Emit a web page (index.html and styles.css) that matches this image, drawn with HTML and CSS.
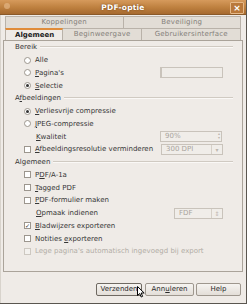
FILE: index.html
```html
<!DOCTYPE html>
<html><head>
<title>PDF-optie</title>
<link rel="stylesheet" href="styles.css">
</head>
<body>
<div class="window">
  <div class="titlebar">
    <span class="menu-dot"></span>
    <span class="title">PDF-optie</span>
    <span class="close">&#215;</span>
  </div>
  <div class="client">
    <div class="tabs">
      <div class="tabrow back">
        <div class="tab w119">Koppelingen</div>
        <div class="tab w118">Beveiliging</div>
      </div>
      <div class="tabrow front">
        <div class="tab active w58">Algemeen</div>
        <div class="tab w80">Beginweergave</div>
        <div class="tab w99">Gebruikersinterface</div>
      </div>
    </div>
    <div class="panel">
      <div class="row section"><span>Bereik</span><i class="rule"></i></div>
      <div class="row opt"><b class="radio"></b><span>Alle</span></div>
      <div class="row opt"><b class="radio"></b><span><u>P</u>agina's</span><span class="field pages"></span></div>
      <div class="row opt"><b class="radio on"></b><span><u>S</u>electie</span></div>
      <div class="row section"><span>A<u>f</u>beeldingen</span><i class="rule"></i></div>
      <div class="row opt"><b class="radio on"></b><span><u>V</u>erliesvrije compressie</span></div>
      <div class="row opt"><b class="radio"></b><span><u>J</u>PEG-compressie</span></div>
      <div class="row sub"><span><u>K</u>waliteit</span><span class="field spin">90%<em class="arrows">&#9652;<br>&#9662;</em></span></div>
      <div class="row opt"><b class="check"></b><span><u>A</u>fbeeldingsresolutie verminderen</span><span class="field combo dpi">300 DPI<em class="drop">&#9662;</em></span></div>
      <div class="row section"><span>Algemeen</span><i class="rule"></i></div>
      <div class="row opt"><b class="check"></b><span>P<u>D</u>F/A-1a</span></div>
      <div class="row opt"><b class="check"></b><span><u>T</u>agged PDF</span></div>
      <div class="row opt"><b class="check"></b><span><u>P</u>DF-formulier maken</span></div>
      <div class="row sub"><span><u>O</u>pmaak indienen</span><span class="field combo fdf">FDF<em class="drop">&#8661;</em></span></div>
      <div class="row opt"><b class="check on">&#10003;</b><span><u>B</u>ladwijzers exporteren</span></div>
      <div class="row opt"><b class="check"></b><span>Notities <u>e</u>xporteren</span></div>
      <div class="row opt disabled"><b class="check"></b><span>Lege pagina's automatisch ingevoegd bij export</span></div>
    </div>
    <div class="buttons">
      <span class="btn w46 focus">Verzenden</span>
      <span class="btn w49">Ann<u>u</u>leren</span>
      <span class="btn w45">Help</span>
    </div>
  </div>
  <svg class="cursor" width="8" height="12" viewBox="0 0 8 12">
    <path d="M0.5 0.5 L0.5 9.5 L2.7 7.5 L4.2 11 L5.6 10.4 L4.2 7 L7.2 7 Z" fill="#fff" stroke="#000" stroke-width="1"/>
  </svg>
</div>
</body>
</html>
```

FILE: styles.css
```css
body { margin: 0; background: #fff; font-family: "DejaVu Sans", sans-serif; font-size: 7px; color: #363636; }
.window { position: relative; width: 246px; height: 303px; background: #efebe7; border-right: 1px solid #5a5650; border-bottom: 1px solid #5a5650; box-shadow: inset 1px 0 0 #d8d3cc; }

.titlebar { height: 14px; display: flex; align-items: center; justify-content: center; background: linear-gradient(#d69a5c, #bd7f3e 55%, #a66a30); border-bottom: 1px solid #8a5a2a; position: relative; }
.title { color: #fff; font-weight: bold; font-size: 7.5px; text-shadow: 0 0 2px #6a3d12; letter-spacing: 0.2px; }
.menu-dot { position: absolute; left: 4px; top: 3px; width: 6px; height: 6px; border-radius: 3px; background: #e3b585; opacity: 0.7; }
.close { position: absolute; right: 2px; top: 2px; width: 12px; height: 10px; line-height: 10px; text-align: center; color: #fff; font-weight: bold; font-size: 9px; border: 1px solid #e6b988; border-radius: 1px; background: #b9783a; }

.client { padding: 1px 3px 0 3px; }
.tabs { padding: 0 2px; }
.tabrow { display: flex; height: 12px; }
.tab { box-sizing: border-box; height: 12px; line-height: 11px; text-align: center; color: #85817b; background: #e2ddd6; border: 1px solid #b9b2a9; border-bottom: none; border-left: none; letter-spacing: 0.2px; }
.tabrow .tab:first-child { border-left: 1px solid #b9b2a9; }
.tab.active { background: #efebe7; color: #1c1c1c; font-weight: bold; border-top: 2px solid #e08c3a; line-height: 10px; text-align: left; padding-left: 9px; letter-spacing: 0; }
.w119 { width: 119px; } .w118 { width: 118px; }
.w58 { width: 58px; } .w80 { width: 80px; } .w99 { width: 99px; }

.panel { height: 230px; border: 1px solid #aaa39a; background: #efebe7; padding-left: 11px; padding-right: 9px; }
.row { display: flex; align-items: center; height: 12.75px; white-space: nowrap; }
.section span { margin-right: 3px; }
.rule { flex: 1; height: 1px; background: #d0cac2; border-bottom: 1px solid #faf8f6; }
.opt { padding-left: 9px; }
.sub { padding-left: 21px; }
.disabled { color: #b2ada6; }
u { text-decoration: underline; text-underline-offset: 1px; }

.radio, .check { box-sizing: border-box; display: inline-flex; align-items: center; justify-content: center; width: 7px; height: 7px; margin-right: 4px; background: #fff; border: 1px solid #9c968e; }
.radio { border-radius: 50%; }
.radio.on::after { content: ""; width: 3px; height: 3px; border-radius: 50%; background: #333; }
.check { font-size: 6px; line-height: 6px; font-weight: bold; color: #333; }
.disabled .check { border-color: #cdc8c1; background: #f3f1ee; }

.field { box-sizing: border-box; margin-left: auto; margin-right: 10px; height: 11px; border: 1px solid #c9c3bb; background: #f0ede9; color: #a9a49d; line-height: 9px; padding-left: 4px; position: relative; display: block; }
.pages { width: 63px; border-left-width: 2px; background: #efece8; }
.spin { width: 62px; margin-right: 11px; }
.dpi { width: 62px; }
.fdf { width: 49px; }
.arrows { position: absolute; right: 1px; top: 0; font-style: normal; font-size: 4px; line-height: 4px; color: #bdb7af; text-align: center; }
.drop { position: absolute; right: 0; top: 0; bottom: 0; width: 10px; border-left: 1px solid #d6d0c8; font-style: normal; font-size: 6px; text-align: center; color: #bdb7af; }

.buttons { display: flex; justify-content: flex-end; gap: 2px; padding: 11px 2px 0 0; }
.btn { box-sizing: border-box; height: 13px; line-height: 11px; text-align: center; border: 1px solid #9e978e; border-radius: 2px; background: linear-gradient(#f6f4f1, #e3ded8); color: #2a2a2a; }
.btn.focus { border-color: #6f6962; }
.w46 { width: 46px; margin-right: 1px; } .w49 { width: 49px; } .w45 { width: 45px; }

.cursor { position: absolute; left: 137px; top: 286px; }
```
